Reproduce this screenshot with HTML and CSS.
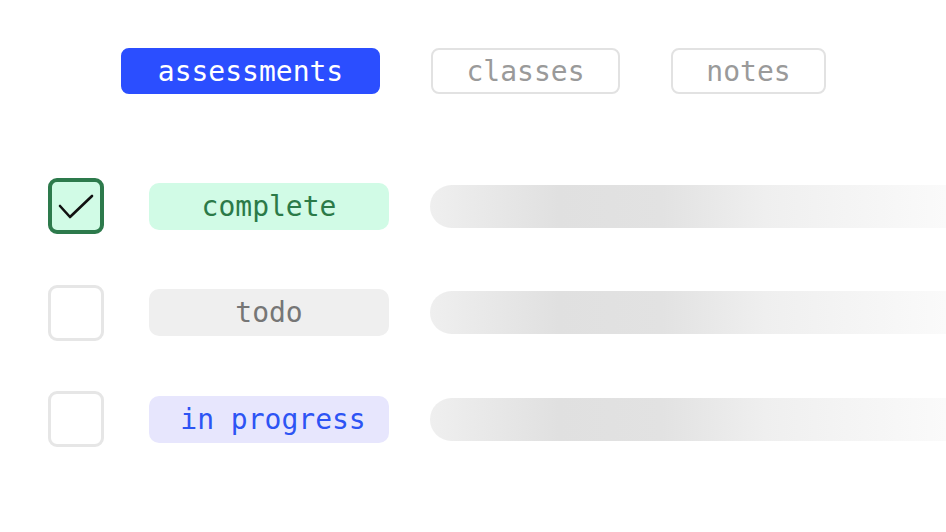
FILE: index.html
```html
<!DOCTYPE html>
<html>
<head>
<meta charset="utf-8">
<link rel="stylesheet" href="styles.css">
</head>
<body>
<div class="page">
  <nav class="tabs">
    <div class="tab tab-active">assessments</div>
    <div class="tab">classes</div>
    <div class="tab">notes</div>
  </nav>
  <div class="rows">
    <div class="row">
      <div class="check check-on">
        <svg width="36" height="26" viewBox="0 0 36 26"><polyline points="2,12 12,23 34,2" fill="none" stroke="#111" stroke-width="2.6" stroke-linecap="round" stroke-linejoin="round"/></svg>
      </div>
      <div class="pill pill-complete">complete</div>
      <div class="bar"></div>
    </div>
    <div class="row">
      <div class="check"></div>
      <div class="pill pill-todo">todo</div>
      <div class="bar"></div>
    </div>
    <div class="row">
      <div class="check"></div>
      <div class="pill pill-progress">in progress</div>
      <div class="bar"></div>
    </div>
  </div>
</div>
</body>
</html>
```
FILE: styles.css
```css
html, body {
  margin: 0;
  padding: 0;
  background: #ffffff;
  overflow: hidden;
}
body {
  width: 946px;
  height: 532px;
  font-family: "DejaVu Sans Mono", "Liberation Mono", monospace;
}
.page {
  padding-top: 48px;
}
.tabs {
  display: flex;
  gap: 51px;
  padding-left: 121px;
}
.tab {
  box-sizing: border-box;
  height: 46px;
  display: flex;
  align-items: center;
  justify-content: center;
  border: 2px solid #e2e2e2;
  border-radius: 8px;
  color: #9a9a9a;
  font-size: 28px;
  padding: 0;
}
.tab-active {
  background: #2b4eff;
  border-color: #2b4eff;
  color: #ffffff;
  width: 259px;
}
.tab:nth-child(2) { width: 189px; }
.tab:nth-child(3) { width: 155px; }
.rows {
  display: flex;
  flex-direction: column;
  gap: 50.5px;
  padding-top: 84px;
  padding-left: 47.5px;
}
.row {
  display: flex;
  align-items: center;
  height: 56px;
}
.check {
  box-sizing: border-box;
  width: 56px;
  height: 56px;
  border: 3px solid #e6e6e6;
  border-radius: 9px;
  background: #ffffff;
  display: flex;
  align-items: center;
  justify-content: center;
  flex: none;
}
.check-on {
  border: 4px solid #2d7a4c;
  background: #d1fbe6;
}
.check-on svg {
  margin-top: 2px;
}
.pill {
  margin-left: 45.5px;
  width: 240px;
  height: 47px;
  border-radius: 10px;
  display: flex;
  align-items: center;
  justify-content: center;
  font-size: 28px;
  flex: none;
}
.pill-complete {
  background: #d1fbe6;
  color: #2b7a48;
}
.pill-todo {
  background: #efefef;
  color: #767676;
}
.pill-progress {
  background: #e7e6fd;
  color: #2d54f4;
  padding-left: 8px;
  box-sizing: border-box;
}
.bar {
  margin-left: 41px;
  flex: 1;
  height: 43px;
  border-radius: 22px 0 0 22px;
  background: linear-gradient(to right, #efefef 0%, #e0e0e0 25%, #e2e2e2 45%, #efefef 65%, #fafafa 100%);
}
```
